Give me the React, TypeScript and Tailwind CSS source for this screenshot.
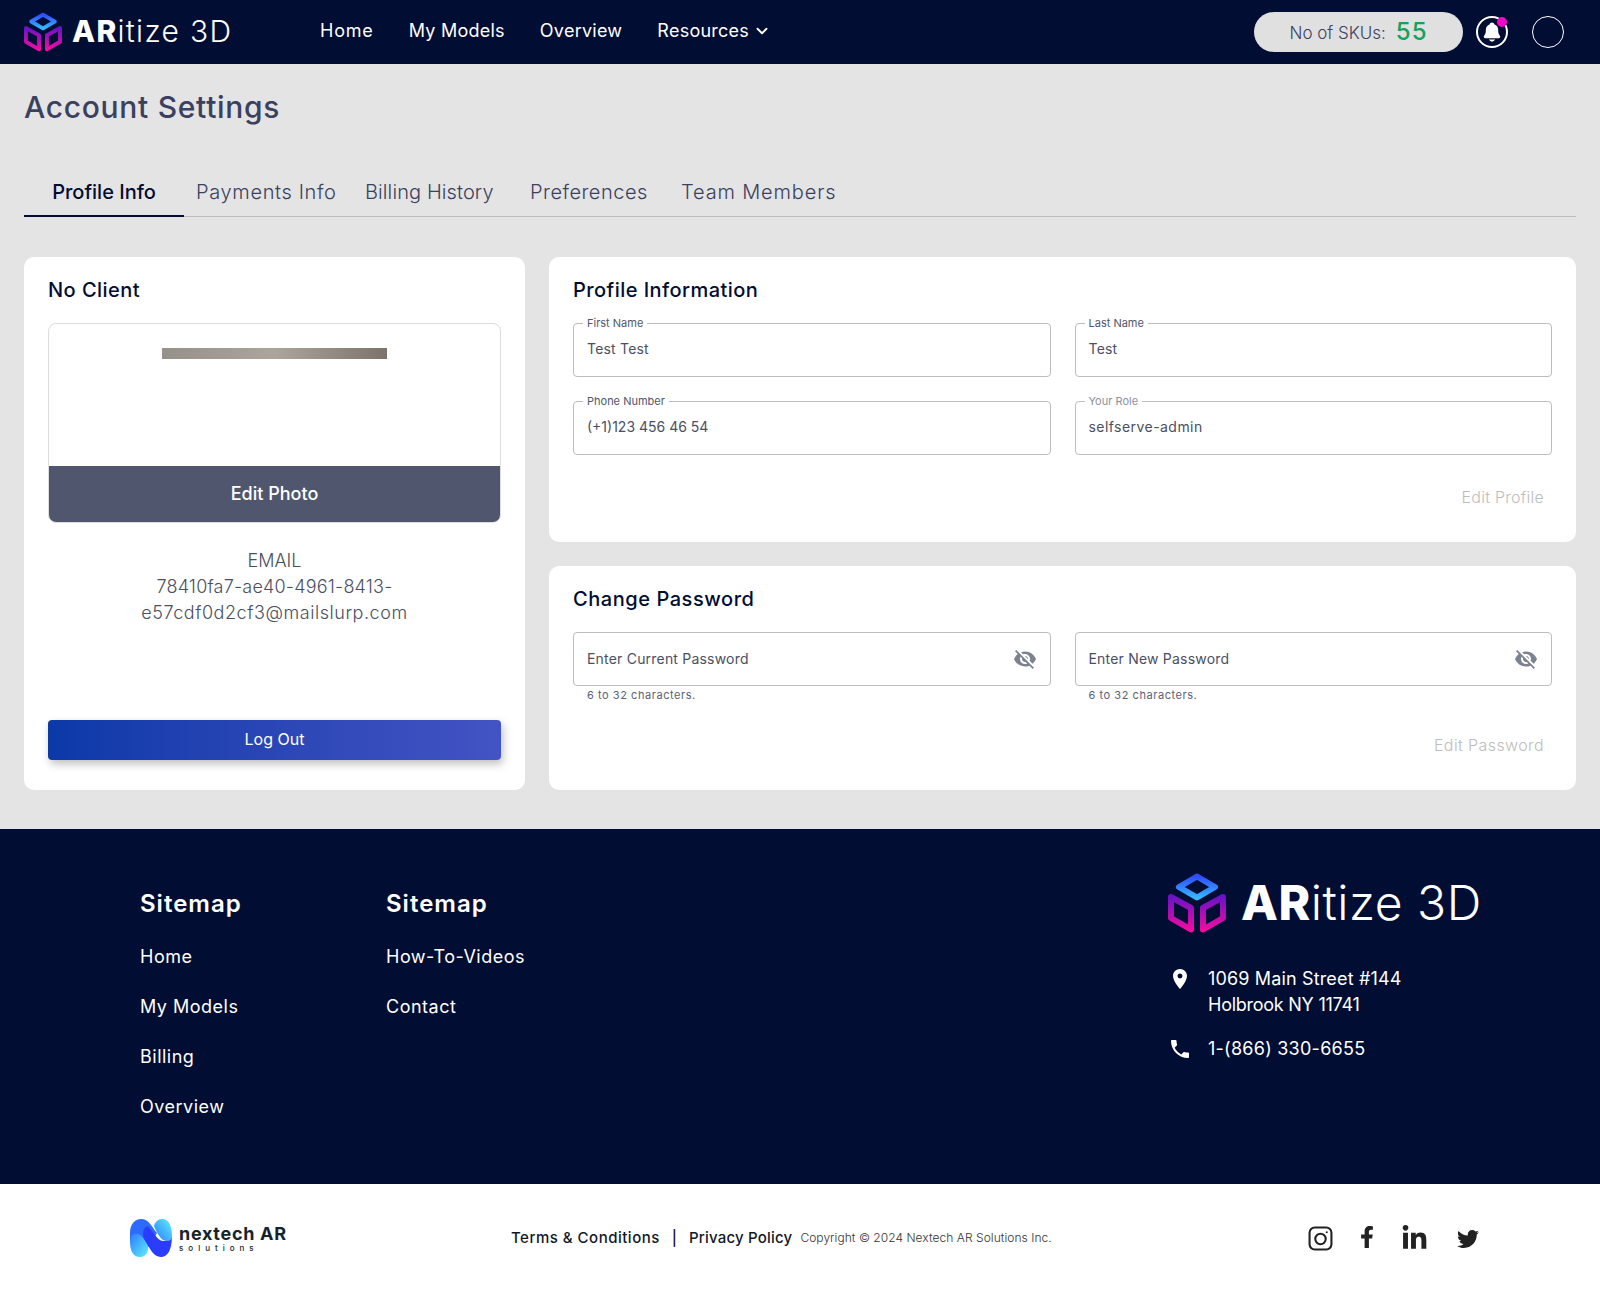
import { ChevronDown } from "lucide-react";
import { FaFacebookF, FaLinkedinIn, FaTwitter } from "react-icons/fa";
import { IoNotifications } from "react-icons/io5";
import { MdLocationOn, MdLocalPhone, MdVisibilityOff } from "react-icons/md";

const font = { fontFamily: "Inter, 'Noto Sans', sans-serif" };

function CubeMark({ id, className }: { id: string; className: string }) {
  return (
    <svg viewBox="0 0 58 60" className={className} fill="none">
      <defs>
        <linearGradient id={`${id}-top`} x1="0" y1="0" x2="0" y2="1">
          <stop offset="0" stopColor="#2f4cff" />
          <stop offset="1" stopColor="#35b6ff" />
        </linearGradient>
        <linearGradient id={`${id}-side`} x1="0" y1="20" x2="0" y2="60" gradientUnits="userSpaceOnUse">
          <stop offset="0" stopColor="#5a14c8" />
          <stop offset="1" stopColor="#ff0aa0" />
        </linearGradient>
      </defs>
      <path d="M29 3.5 L47 14 L29 24.5 L11 14 Z" stroke={`url(#${id}-top)`} strokeWidth="6" strokeLinejoin="round" />
      <path d="M3 24 L23 35 V56.5 L3 45 Z" stroke={`url(#${id}-side)`} strokeWidth="6" strokeLinejoin="round" />
      <path d="M55 24 L35 35 V56.5 L55 45 Z" stroke={`url(#${id}-side)`} strokeWidth="6" strokeLinejoin="round" />
    </svg>
  );
}

function NextechMark() {
  return (
    <svg viewBox="0 0 44 38" className="h-[38px] w-[44px]">
      <defs>
        <linearGradient id="nx-a" x1="0" y1="0" x2="1" y2="1">
          <stop offset="0" stopColor="#2d7bff" />
          <stop offset="1" stopColor="#5ef0ff" />
        </linearGradient>
        <linearGradient id="nx-b" x1="1" y1="0" x2="0" y2="1">
          <stop offset="0" stopColor="#5ef0ff" />
          <stop offset="1" stopColor="#2d7bff" />
        </linearGradient>
      </defs>
      <path d="M1 14 C1 4 7 0 12 0 C20 0 22 7 28 14 L20 28 C16 26 13 22 9 22 C4 22 1 24 1 24 Z" fill="#2d6bff" />
      <path d="M1 22 C1 16 5 14 9 15 C13 16 16 21 19 27 C20 32 17 38 11 38 C4 38 1 32 1 22 Z" fill="url(#nx-a)" />
      <path d="M43 16 C43 34 37 38 32 38 C24 38 21 29 15 20 C13 14 14 10 18 7 C24 11 28 22 34 22 C39 22 43 20 43 16 Z" fill="#2a3dff" />
      <path d="M43 18 C43 22 38 23 34 21 C30 18 27 12 25 7 C26 3 29 0 33 0 C40 0 43 7 43 18 Z" fill="url(#nx-b)" />
    </svg>
  );
}

function Wordmark({ size }: { size: "sm" | "lg" }) {
  return (
    <span
      className={
        size === "sm"
          ? "text-[30px] leading-none font-light tracking-[1.3px] text-white whitespace-nowrap"
          : "text-[48px] leading-none font-light tracking-[0.5px] text-white whitespace-nowrap"
      }
    >
      <span className="font-extrabold">AR</span>itize 3D
    </span>
  );
}

function Field({ label, value, muted, tracking }: { label: string; value: string; muted?: boolean; tracking: string }) {
  return (
    <fieldset className="h-[59px] rounded border border-[#bdbdbd] px-[9px]">
      <legend className={`px-[4px] text-[11px] leading-[11px] ${muted ? "text-[#8b90a0]" : "text-[#4f566e]"}`}>{label}</legend>
      <div className={`pl-[4px] pt-[10px] text-[14px] leading-[20px] text-[#4a4f63] ${tracking}`}>{value}</div>
    </fieldset>
  );
}

function PasswordField({ placeholder }: { placeholder: string }) {
  return (
    <div>
      <div className="flex h-[54px] items-center justify-between rounded border border-[#bdbdbd] px-[13px]">
        <span className="pb-[2px] text-[14px] tracking-[0.2px] text-[#4a4f63]">{placeholder}</span>
        <MdVisibilityOff className="h-[24px] w-[24px] text-[#7d8290]" />
      </div>
      <p className="mt-[1px] pl-[14px] text-[11px] leading-[16px] tracking-[0.55px] text-[#5b6174]">6 to 32 characters.</p>
    </div>
  );
}

function FooterLinks({ items, width }: { items: string[]; width: string }) {
  return (
    <div className={`${width} pt-[13px]`}>
      <h3 className="text-[24px] leading-[36px] font-semibold tracking-[1px] text-white">Sitemap</h3>
      <ul className="mt-[21px] flex flex-col gap-[23px]">
        {items.map((item) => (
          <li key={item} className="text-[18px] leading-[27px] tracking-[0.5px] text-white">
            {item}
          </li>
        ))}
      </ul>
    </div>
  );
}

export default function App() {
  const tabs = [
    { label: "Payments Info", cls: "ml-[12px] w-[169px] tracking-[0.65px]" },
    { label: "Billing History", cls: "w-[165px] tracking-[0.1px]" },
    { label: "Preferences", cls: "w-[151px] tracking-[0.5px]" },
    { label: "Team Members", cls: "tracking-[0.85px]" },
  ];

  return (
    <div style={font} className="w-full bg-[#e4e4e4]">
      {/* Top nav */}
      <header className="flex h-[64px] items-center bg-[#020d33] pl-[24px] pr-[36px]">
        <CubeMark id="nav" className="h-[40px] w-[38px]" />
        <div className="ml-[10px] w-[248px]">
          <Wordmark size="sm" />
        </div>
        <nav className="flex items-center gap-[35px] pb-[3px] text-[18px] tracking-[0.25px] text-white">
          <span className="tracking-[0.8px]">Home</span>
          <span>My Models</span>
          <span>Overview</span>
          <span className="flex items-center gap-[4px]">
            Resources <ChevronDown className="h-[18px] w-[18px]" strokeWidth={2.5} />
          </span>
        </nav>
        <div className="ml-auto flex items-center">
          <div className="flex h-[40px] w-[209px] items-center justify-center gap-[10px] rounded-[20px] bg-[#e0e0e0]">
            <span className="mt-[4px] text-[17px] font-light text-[#3a4160]">No of SKUs:</span>
            <span className="text-[24px] font-medium tracking-[1px] text-[#16a05c]">55</span>
          </div>
          <div className="relative ml-[13px] flex h-[32px] w-[32px] items-center justify-center rounded-full border-2 border-white">
            <IoNotifications className="h-[22px] w-[22px] text-white" />
            <span className="absolute right-[-1px] top-[-1px] h-[10px] w-[10px] rounded-full bg-[#f00ac8]" />
          </div>
          <div className="ml-[24px] h-[32px] w-[32px] rounded-full border border-white" />
        </div>
      </header>

      <main className="px-[24px] pb-[39px]">
        <h1 className="pt-[21px] text-[30px] leading-[45px] font-medium tracking-[0.7px] text-[#3a4160]">Account Settings</h1>

        {/* Tabs */}
        <div className="mt-[41px] flex h-[46px] items-stretch border-b border-[#bcbcbc] text-[20px] font-light text-[#3a4160]">
          <div className="mb-[-1px] flex w-[160px] items-center justify-center border-b-2 border-[#020d33] pb-[3px] font-medium text-[#020d33]">
            Profile Info
          </div>
          {tabs.map((tab) => (
            <div key={tab.label} className={`flex items-center pb-[4px] ${tab.cls}`}>
              {tab.label}
            </div>
          ))}
        </div>

        <div className="mt-[40px] grid grid-cols-[501px_1fr] gap-[24px]">
          {/* Client card */}
          <section className="flex h-[533px] flex-col rounded-[10px] bg-white px-[24px] pb-[30px] pt-[18px]">
            <h2 className="text-[20px] leading-[30px] font-medium tracking-[0.45px] text-[#020d33]">No Client</h2>
            <div className="mt-[18px] flex h-[200px] flex-col overflow-hidden rounded-[8px] border border-[#dddddd]">
              <div className="flex flex-1 justify-center pt-[24px]">
                <div className="h-[11px] w-[225px] bg-gradient-to-r from-[#96908a] via-[#aca59c] to-[#7c746b]" />
              </div>
              <div className="flex h-[56px] items-center justify-center bg-[#4f566e] pb-[2px] text-[18px] font-medium text-white">
                Edit Photo
              </div>
            </div>
            <div className="mt-[25px] flex flex-col items-center text-center text-[18px] leading-[26px] font-light text-[#4a4f63]">
              <span>EMAIL</span>
              <span className="tracking-[0.2px]">78410fa7-ae40-4961-8413-</span>
              <span className="tracking-[0.55px]">e57cdf0d2cf3@mailslurp.com</span>
            </div>
            <button className="mt-auto h-[40px] rounded bg-gradient-to-r from-[#0a39a8] to-[#4353c4] pb-[2px] text-[16px] text-white shadow-[2px_4px_8px_rgba(0,0,0,0.25)]">
              Log Out
            </button>
          </section>

          <div className="flex flex-col gap-[24px]">
            {/* Profile information */}
            <section className="h-[285px] rounded-[10px] bg-white px-[24px] pt-[18px]">
              <h2 className="text-[20px] leading-[30px] font-medium tracking-[0.45px] text-[#020d33]">Profile Information</h2>
              <div className="mt-[13px] grid grid-cols-2 gap-x-[24px] gap-y-[19px]">
                <Field label="First Name" value="Test Test" tracking="tracking-[0.2px]" />
                <Field label="Last Name" value="Test" tracking="tracking-[0.2px]" />
                <Field label="Phone Number" value="(+1)123 456 46 54" tracking="tracking-normal" />
                <Field label="Your Role" value="selfserve-admin" muted tracking="tracking-[0.45px]" />
              </div>
              <div className="mt-[30px] pr-[8px] text-right text-[16px] font-light tracking-[0.25px] text-[#bdbdbd]">Edit Profile</div>
            </section>

            {/* Change password */}
            <section className="h-[224px] rounded-[10px] bg-white px-[24px] pt-[18px]">
              <h2 className="text-[20px] leading-[30px] font-medium tracking-[0.55px] text-[#020d33]">Change Password</h2>
              <div className="mt-[18px] grid grid-cols-2 gap-x-[24px]">
                <PasswordField placeholder="Enter Current Password" />
                <PasswordField placeholder="Enter New Password" />
              </div>
              <div className="mt-[30px] pr-[8px] text-right text-[16px] font-light tracking-[0.4px] text-[#bdbdbd]">Edit Password</div>
            </section>
          </div>
        </div>
      </main>

      {/* Dark footer */}
      <footer className="flex h-[355px] bg-[#020d33] pl-[140px] pr-[120px] pt-[44px]">
        <FooterLinks items={["Home", "My Models", "Billing", "Overview"]} width="w-[246px]" />
        <FooterLinks items={["How-To-Videos", "Contact"]} width="w-[200px]" />
        <div className="ml-auto w-[312px]">
          <div className="flex items-center">
            <CubeMark id="foot" className="h-[60px] w-[58px] shrink-0" />
            <div className="ml-[15px]">
              <Wordmark size="lg" />
            </div>
          </div>
          <div className="mt-[33px] flex gap-[16px] text-[18px] leading-[26px] text-white">
            <MdLocationOn className="mt-[1px] h-[24px] w-[24px] shrink-0" />
            <div>
              <span className="tracking-[0.15px]">1069 Main Street #144</span>
              <br />
              <span className="tracking-[-0.25px]">Holbrook NY 11741</span>
            </div>
          </div>
          <div className="mt-[18px] flex items-center gap-[16px] text-[18px] leading-[26px] tracking-[0.25px] text-white">
            <MdLocalPhone className="h-[24px] w-[24px] shrink-0" />
            <span>1-(866) 330-6655</span>
          </div>
        </div>
      </footer>

      {/* Legal bar */}
      <div className="flex h-[106px] items-center bg-white pl-[129px] pr-[121px] pt-[2px]">
        <NextechMark />
        <div className="ml-[6px] w-[332px] text-[#15242b]">
          <div className="text-[18px] leading-[20px] font-bold tracking-[0.7px]">nextech AR</div>
          <div className="text-[8px] leading-[9px] font-medium tracking-[5px]">solutions</div>
        </div>
        <span className="text-[15px] font-medium tracking-[0.5px] text-[#111827]">Terms &amp; Conditions</span>
        <span className="mx-[12px] text-[15px] font-medium text-[#111827]">|</span>
        <span className="text-[15px] font-medium tracking-[0.2px] text-[#111827]">Privacy Policy</span>
        <span className="ml-[8px] text-[12px] font-light tracking-[0.05px] text-[#333]">Copyright © 2024 Nextech AR Solutions Inc.</span>
        <div className="ml-auto flex items-center text-[#222]">
          <svg viewBox="0 0 24 24" className="h-[25px] w-[25px]" fill="none" stroke="currentColor" strokeWidth="2">
            <rect x="1.5" y="1.5" width="21" height="21" rx="5" />
            <circle cx="12" cy="12.5" r="5" />
            <circle cx="18" cy="6" r="1" fill="currentColor" stroke="none" />
          </svg>
          <FaFacebookF className="ml-[23px] mb-[2px] h-[22px] w-[22px]" />
          <FaLinkedinIn className="ml-[23px] h-[27px] w-[27px]" />
          <FaTwitter className="ml-[29px] mt-[2px] h-[22px] w-[22px]" />
        </div>
      </div>
    </div>
  );
}
